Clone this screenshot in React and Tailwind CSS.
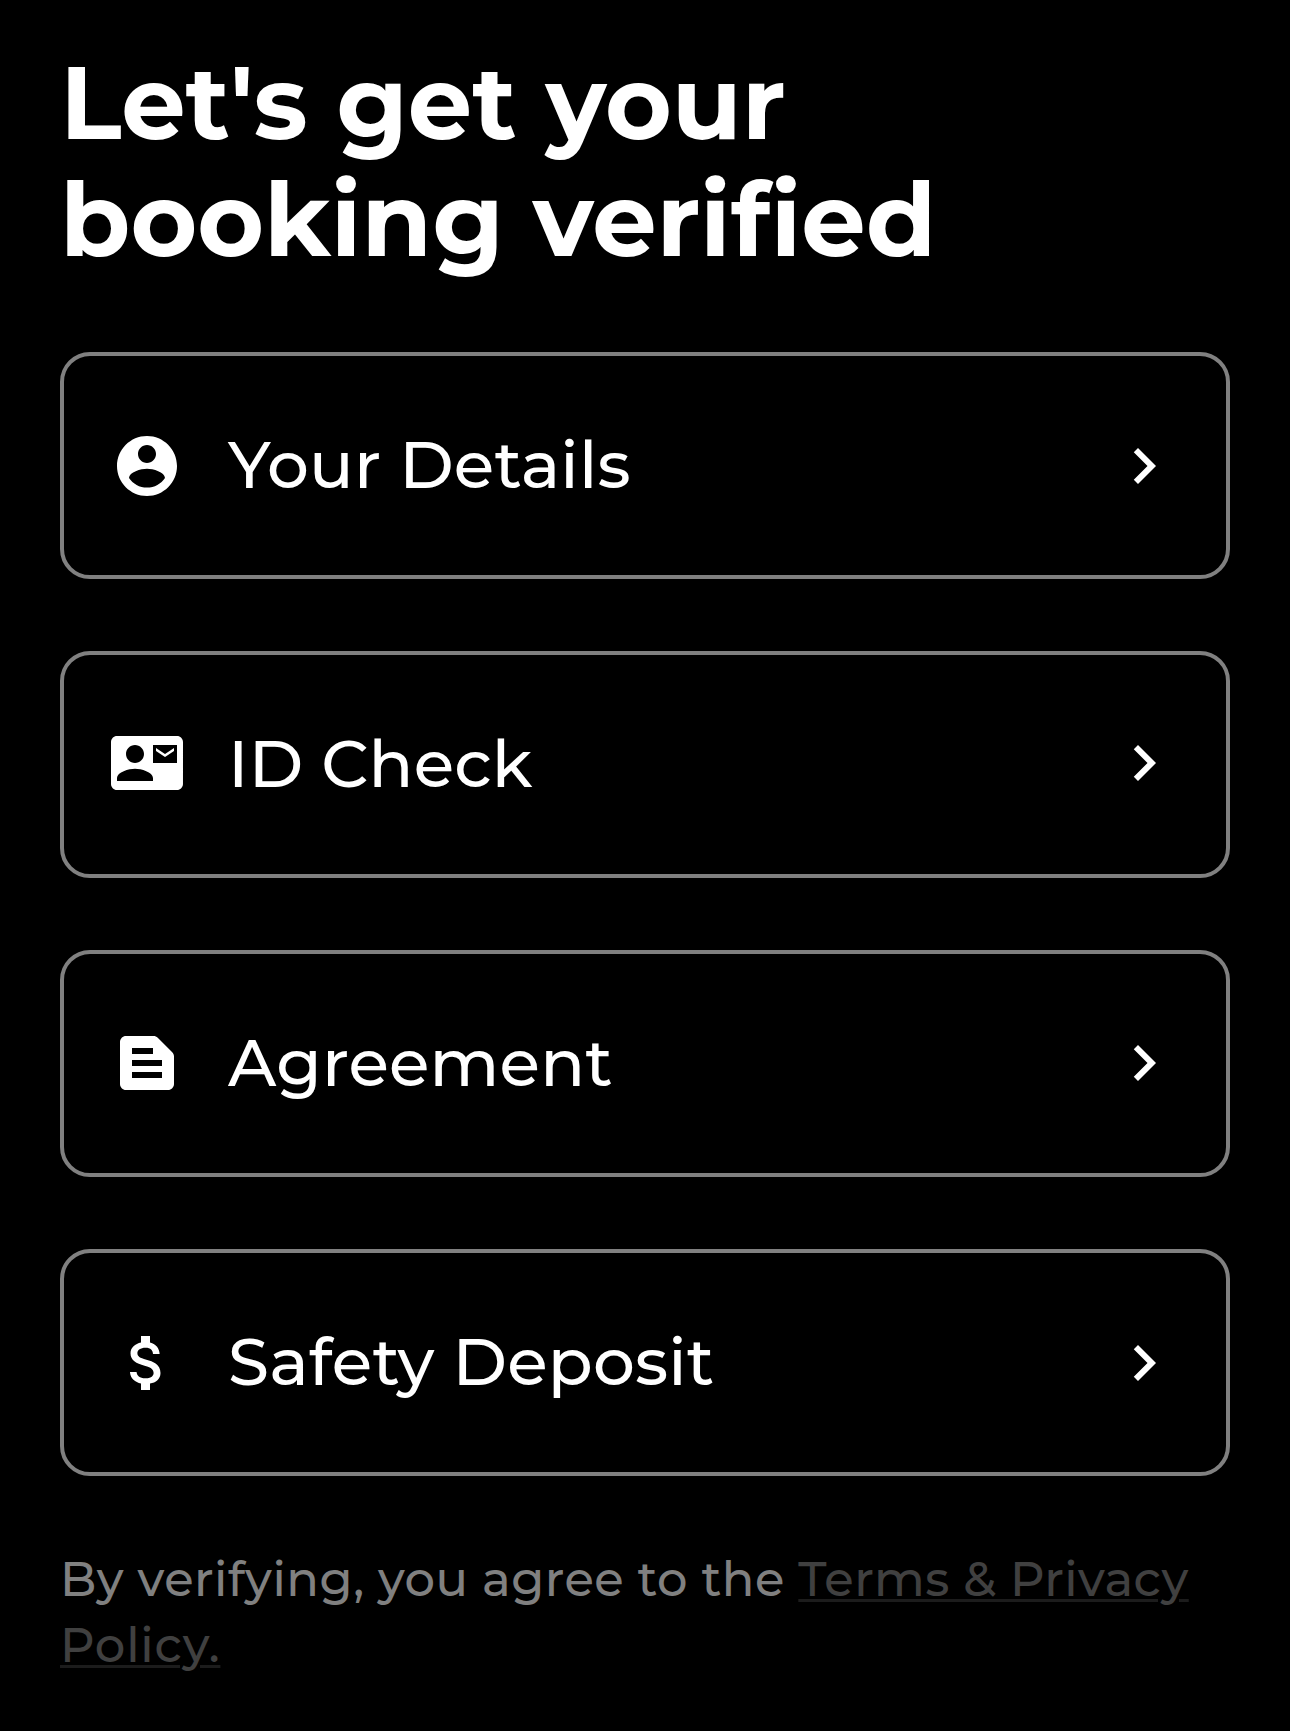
import { MdAttachMoney, MdChevronRight, MdContactMail, MdTextSnippet } from 'react-icons/md';

function AccountIcon({ size }) {
  return (
    <svg width={size} height={size} viewBox="0 0 24 24" fill="currentColor">
      <path d="M12 2C6.48 2 2 6.48 2 12s4.48 10 10 10 10-4.48 10-10S17.52 2 12 2zm0 3c1.66 0 3 1.34 3 3s-1.34 3-3 3-3-1.34-3-3 1.34-3 3-3zm0 14.2c-2.5 0-4.71-1.28-6-3.22.03-1.99 4-3.08 6-3.08 1.99 0 5.97 1.09 6 3.08-1.29 1.94-3.5 3.22-6 3.22z" />
    </svg>
  );
}

const steps = [
  { label: 'Your Details', icon: AccountIcon, offset: 'pt-[74px]' },
  { label: 'ID Check', icon: MdContactMail, offset: 'pt-[72px]' },
  { label: 'Agreement', icon: MdTextSnippet, offset: 'pt-[73px]' },
  { label: 'Safety Deposit', icon: MdAttachMoney, offset: 'pt-[74px]' },
];

function StepCard({ label, icon: Icon, offset }) {
  return (
    <button className="flex items-start w-full h-[227px] pl-[47px] pr-[46px] border-4 border-[#808080] rounded-[30px] text-left text-white">
      <span className={offset}>
        <Icon size={72} />
      </span>
      <span className="flex-1 pl-[45px] pt-[69px] text-[66px] leading-[80px] font-medium tracking-[0.2px] whitespace-nowrap">
        {label}
      </span>
      <span className={offset}>
        <MdChevronRight size={72} />
      </span>
    </button>
  );
}

export default function App() {
  return (
    <main className="min-h-[1731px] bg-black px-[60px] pt-[44px] font-[Montserrat,Inter,sans-serif]">
      <h1 className="text-[102px] leading-[117px] font-bold text-white">
        Let's get your
        <br />
        booking verified
      </h1>

      <div className="flex flex-col gap-[72px] mt-[74px]">
        {steps.map(step => (
          <StepCard key={step.label} {...step} />
        ))}
      </div>

      <p className="mt-[70px] text-[48px] leading-[66px] font-medium tracking-[0.5px] text-[#808080]">
        By verifying, you agree to the{' '}
        <a href="#" className="text-[#404040] underline decoration-[#1c1c1c] decoration-[3px] underline-offset-[3px]">
          Terms &amp; Privacy
          <br />
          <span className="tracking-[0.8px]">Policy.</span>
        </a>
      </p>
    </main>
  );
}
